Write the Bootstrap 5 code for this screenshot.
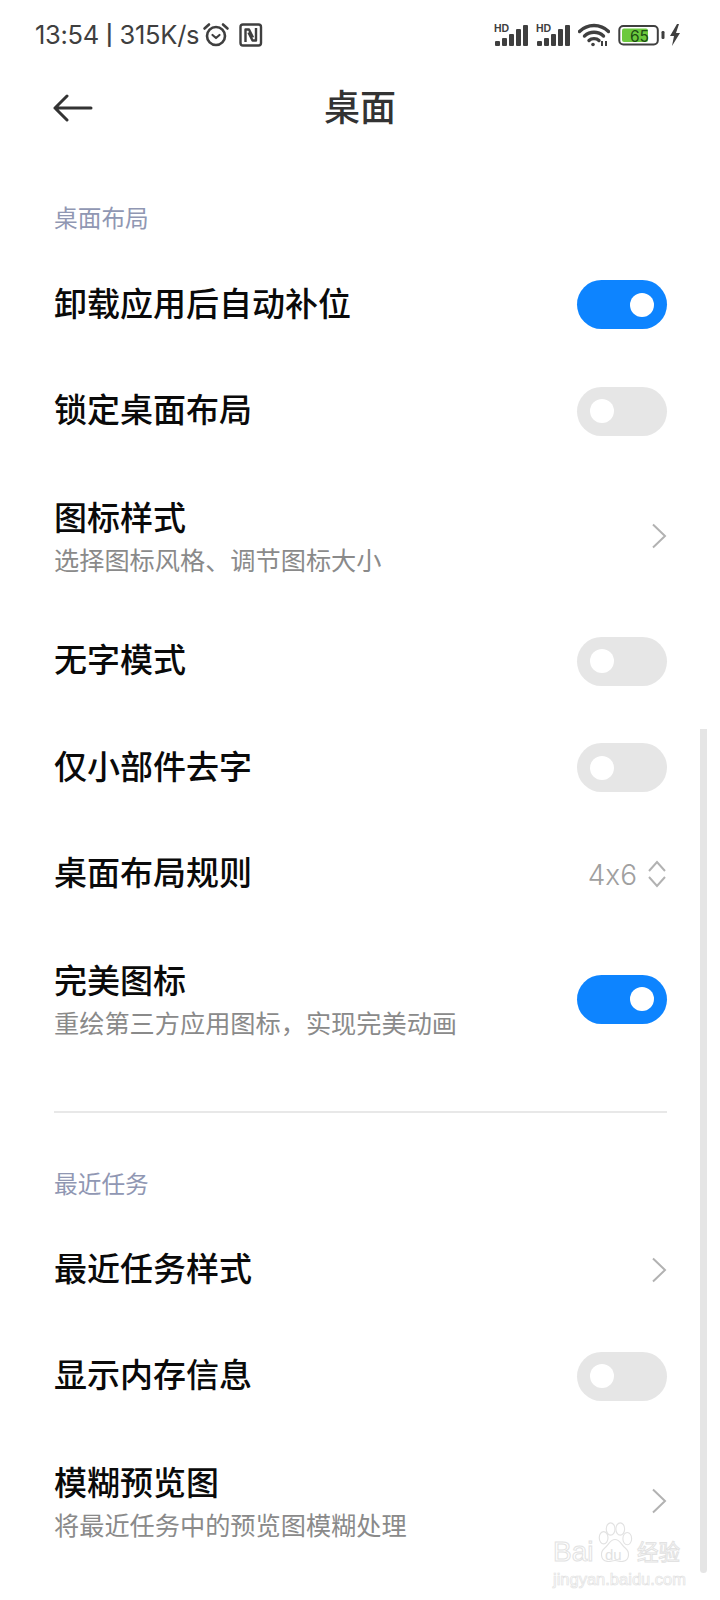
<!DOCTYPE html>
<html lang="zh-CN">
<head>
<meta charset="utf-8">
<title>桌面</title>
<link href="https://cdn.jsdelivr.net/npm/bootstrap@5.3.0/dist/css/bootstrap.min.css" rel="stylesheet">
<style>
html,body{margin:0;background:#fff;}
body{width:720px;height:1600px;overflow:hidden;position:relative;font-family:"Noto Sans CJK SC","Noto Sans",sans-serif;color:#000;}
.sbar{height:70px;padding:0 39px 0 35px;color:#3f3f3f;}
.sbar-text{font-family:Inter,"Noto Sans",sans-serif;font-size:25.5px;line-height:1;letter-spacing:-.3px;font-feature-settings:"calt" 0;}
.sbar-sep{font-size:20px;font-weight:600;position:relative;top:-2px;}
.alarm-ico{margin-left:3px;}
.nfc-ico{margin-left:9px;}
.headbar{height:72px;padding-left:53px;position:relative;}
.head-title{position:absolute;left:0;right:0;text-align:center;font-size:36px;font-weight:500;color:#333;line-height:1;margin-top:-3px;}
.back-arrow{margin-top:3px;}
.group-label{font-size:23.7px;color:#9097b3;line-height:1;padding:0 54px;}
.group-one{padding-top:64px;height:109.2px;}
.item{padding:0 53px 0 54px;height:106.67px;}
.item-tall{height:143.33px;}
.item-name{font-size:33px;font-weight:500;line-height:1;color:#0a0a0a;}
.item-line{padding-bottom:5px;}
.item-sub{font-size:25.2px;line-height:1;color:#8a8a8a;margin-top:14px;white-space:nowrap;}
.tog{width:90px;height:49px;border-radius:25px;padding:0 13px;flex:none;}
.tog-on{background:#0d84ff;}
.tog-off{background:#e6e6e6;}
.knob{width:24px;height:24px;border-radius:50%;background:#fff;}
.value-text{font-family:Inter,"Noto Sans",sans-serif;font-size:28px;color:#a0a0a0;line-height:1;font-weight:300;font-feature-settings:"calt" 0;padding-top:2px;}
.updown{margin-left:10px;}
.rule{height:2px;background:#e8e8e8;margin:40px 53px 0 54px;}
.group-two{padding-top:59px;height:103.3px;}
.scrolltrack{position:absolute;left:700px;top:729px;width:7px;height:844px;background:#e5e5e5;border-radius:0 0 4px 4px;}
.wm{position:absolute;left:551px;top:1520px;width:132px;height:70px;white-space:nowrap;}
.wm-paw{position:absolute;left:45px;top:2px;}
.wm-cn{position:absolute;left:86px;top:20px;font-size:21.5px;line-height:1;color:transparent;-webkit-text-stroke:1px #e2e2e2;}
.wm-ba{position:absolute;left:2px;top:18px;font-family:"Liberation Sans",sans-serif;font-size:28px;line-height:1;color:transparent;-webkit-text-stroke:1px #e2e2e2;}
.wm-du{position:absolute;left:54px;top:27px;font-family:"Liberation Sans",sans-serif;font-size:15px;line-height:1;color:#e2e2e2;}
.wm-url{position:absolute;left:2px;top:51px;font-family:"Liberation Sans",sans-serif;font-size:16.5px;line-height:1;color:transparent;-webkit-text-stroke:.7px #e2e2e2;}
</style>
</head>
<body>

<div class="sbar d-flex align-items-center justify-content-between">
  <div class="d-flex align-items-center">
    <span class="sbar-text">13:54 <span class="sbar-sep">|</span> 315K/s</span>
    <svg class="alarm-ico" width="28" height="26" viewBox="0 0 28 26" fill="none" stroke="#3f3f3f" stroke-width="2.6" stroke-linecap="round" stroke-linejoin="round"><circle cx="14" cy="14" r="9"/><path d="M10.5 13l3.5 3 3.5-3" stroke-width="2.2"/><path d="M2.5 6.5L7 2.5M25.500 6.500L21 2.500"/></svg>
    <svg class="nfc-ico" width="24" height="24" viewBox="0 0 24 24" fill="none" stroke="#3f3f3f" stroke-width="2.400" stroke-linejoin="round"><rect x="1.500" y="1.500" width="20.500" height="21" rx="2.500"/><path d="M6.500 19V6.500h3.500l4 8M17 5v12.500h-3.500l-4-8"/></svg>
  </div>
  <div class="d-flex align-items-center">
    <svg width="34" height="24" viewBox="0 0 34 24" fill="#3f3f3f"><text x="0" y="9" font-family="Liberation Sans" font-weight="700" font-size="10.500">HD</text><rect x="1" y="18" width="5" height="5" rx="1"/><rect x="8" y="15" width="5" height="8" rx="1"/><rect x="15" y="11" width="5" height="12" rx="1"/><rect x="22" y="6" width="5" height="17" rx="1"/><rect x="29" y="2" width="5" height="21" rx="1"/></svg>
    <svg class="ms-2" width="34" height="24" viewBox="0 0 34 24" fill="#3f3f3f"><text x="0" y="9" font-family="Liberation Sans" font-weight="700" font-size="10.500">HD</text><rect x="1" y="18" width="5" height="5" rx="1"/><rect x="8" y="15" width="5" height="8" rx="1"/><rect x="15" y="11" width="5" height="12" rx="1"/><rect x="22" y="6" width="5" height="17" rx="1"/><rect x="29" y="2" width="5" height="21" rx="1"/></svg>
    <svg class="ms-2" width="32" height="24" viewBox="0 0 32 24" fill="none" stroke="#3f3f3f" stroke-width="3.400" stroke-linecap="round"><path d="M1.500 8.500C9.500 .5 22.500 .5 30.500 8.500"/><path d="M6.500 13C12 8 20 8 25.500 13"/><path d="M11 17.500C13.500 15 18.500 15 21 17.500"/><circle cx="15" cy="21.500" r="1.800" fill="#3f3f3f" stroke="none"/><path d="M24 18v5M28 18v5" stroke-width="2" stroke-linecap="butt"/></svg>
    <svg class="ms-2" width="47" height="24" viewBox="0 0 47 24"><rect x="1.300" y="3" width="38.500" height="18.500" rx="4" fill="#fff" stroke="#3f3f3f" stroke-width="2"/><rect x="4" y="5.500" width="26" height="13.500" rx="2" fill="#6cc93e"/><text x="12" y="18.500" font-family="Inter,Liberation Sans" font-size="15.500" fill="#1d4d14">65</text><rect x="43.500" y="8" width="3" height="8" rx="1.200" fill="#3f3f3f"/></svg>
    <svg class="ms-1" width="12" height="22" viewBox="0 0 12 22" fill="#3f3f3f"><path d="M8 0L1 12h4l-2 10 8-13H7l3-9z"/></svg>
  </div>
</div>

<div class="headbar d-flex align-items-center">
  <div class="head-title">桌面</div>
  <svg class="back-arrow" width="40" height="28" viewBox="0 0 40 28" fill="none" stroke="#333" stroke-width="3" stroke-linecap="round" stroke-linejoin="round"><path d="M2 14H38M14 2L2 14l12 12"/></svg>
</div>

<div class="group-one"><div class="group-label">桌面布局</div></div>

<div class="item d-flex align-items-center justify-content-between">
  <span class="item-name item-line">卸载应用后自动补位</span>
  <span class="tog tog-on d-flex align-items-center justify-content-end"><span class="knob"></span></span>
</div>
<div class="item d-flex align-items-center justify-content-between">
  <span class="item-name item-line">锁定桌面布局</span>
  <span class="tog tog-off d-flex align-items-center"><span class="knob"></span></span>
</div>
<div class="item item-tall d-flex align-items-center justify-content-between">
  <div><div class="item-name">图标样式</div><div class="item-sub">选择图标风格、调节图标大小</div></div>
  <svg width="16" height="26" viewBox="0 0 16 26" fill="none" stroke="#b2b2b2" stroke-width="2"><path d="M2 1.500L14 13 2 24.500"/></svg>
</div>
<div class="item d-flex align-items-center justify-content-between">
  <span class="item-name item-line">无字模式</span>
  <span class="tog tog-off d-flex align-items-center"><span class="knob"></span></span>
</div>
<div class="item d-flex align-items-center justify-content-between">
  <span class="item-name item-line">仅小部件去字</span>
  <span class="tog tog-off d-flex align-items-center"><span class="knob"></span></span>
</div>
<div class="item d-flex align-items-center justify-content-between">
  <span class="item-name item-line">桌面布局规则</span>
  <div class="d-flex align-items-center">
    <span class="value-text">4x6</span>
    <svg class="updown" width="20" height="28" viewBox="0 0 20 28" fill="none" stroke="#b2b2b2" stroke-width="2"><path d="M2 11L10 2l8 9M2 17l8 9 8-9"/></svg>
  </div>
</div>
<div class="item item-tall d-flex align-items-center justify-content-between">
  <div><div class="item-name">完美图标</div><div class="item-sub">重绘第三方应用图标，实现完美动画</div></div>
  <span class="tog tog-on d-flex align-items-center justify-content-end"><span class="knob"></span></span>
</div>

<div class="rule"></div>
<div class="group-two"><div class="group-label">最近任务</div></div>

<div class="item d-flex align-items-center justify-content-between">
  <span class="item-name item-line">最近任务样式</span>
  <svg width="16" height="26" viewBox="0 0 16 26" fill="none" stroke="#b2b2b2" stroke-width="2"><path d="M2 1.500L14 13 2 24.500"/></svg>
</div>
<div class="item d-flex align-items-center justify-content-between">
  <span class="item-name item-line">显示内存信息</span>
  <span class="tog tog-off d-flex align-items-center"><span class="knob"></span></span>
</div>
<div class="item item-tall d-flex align-items-center justify-content-between">
  <div><div class="item-name">模糊预览图</div><div class="item-sub">将最近任务中的预览图模糊处理</div></div>
  <svg width="16" height="26" viewBox="0 0 16 26" fill="none" stroke="#b2b2b2" stroke-width="2"><path d="M2 1.500L14 13 2 24.500"/></svg>
</div>

<div class="scrolltrack"></div>

<div class="wm">
  <svg class="wm-paw" width="38" height="42" viewBox="0 0 40 48" fill="#fff" stroke="#e2e2e2" stroke-width="1.300"><ellipse cx="7" cy="18" rx="5" ry="7"/><ellipse cx="15" cy="8" rx="5" ry="7"/><ellipse cx="26" cy="8" rx="5" ry="7"/><ellipse cx="34" cy="19" rx="5" ry="7"/><path d="M20 20c-6 0-7 6-12 10-5 4-5 14 3 15 4 .5 6-1 9-1s5 1.500 9 1c8-1 8-11 3-15-5-4-6-10-12-10z"/></svg>
  <span class="wm-ba">Bai</span>
  <span class="wm-du">du</span>
  <span class="wm-cn">经验</span>
  <span class="wm-url">jingyan.baidu.com</span>
</div>

<script src="https://cdn.jsdelivr.net/npm/bootstrap@5.3.0/dist/js/bootstrap.bundle.min.js"></script>
</body>
</html>
